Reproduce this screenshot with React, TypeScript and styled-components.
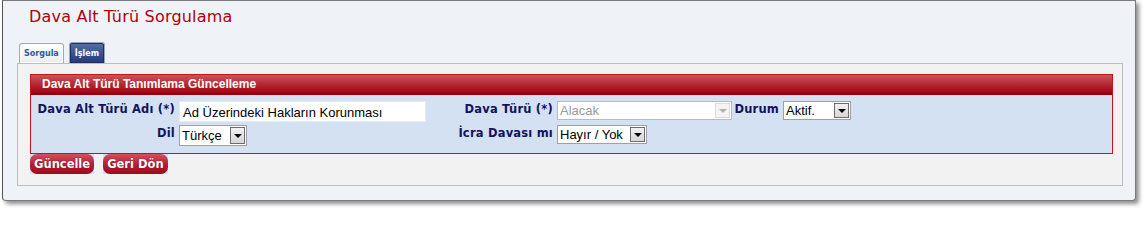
import styled, { createGlobalStyle } from 'styled-components';

const GlobalStyle = createGlobalStyle`
	html, body {
		margin: 0;
		padding: 0;
		background: #ffffff;
	}
	body {
		font-family: 'DejaVu Sans', Verdana, sans-serif;
	}
`;

const Page = styled.div`
	padding: 0 10px 11px 2px;
`;

const Window = styled.div`
	background: #eff3f8;
	border: 1px solid #7a7a7a;
	border-left-color: #555;
	border-radius: 0 0 4px 4px;
	box-shadow: 3px 3px 4px rgba(0, 0, 0, 0.45);
	height: 201px;
	box-sizing: border-box;
	padding: 7px 12px 0 14px;
`;

const Title = styled.h1`
	margin: 0 0 0 12px;
	font-family: 'DejaVu Sans', Verdana, sans-serif;
	font-weight: normal;
	font-size: 16px;
	letter-spacing: 0.2px;
	line-height: 18px;
	color: #b0000e;
`;

const TabBar = styled.div`
	display: flex;
	align-items: flex-end;
	gap: 5px;
	margin: 16px 0 0 2px;
	height: 21px;
`;

const Tab = styled.div<{ $active?: boolean }>`
	box-sizing: border-box;
	height: ${p => (p.$active ? '21px' : '20px')};
	padding: 0 ${p => (p.$active ? '5px' : '4px')};
	display: flex;
	align-items: center;
	font-family: 'DejaVu Sans', Tahoma, sans-serif;
	font-weight: bold;
	font-size: 8px;
	border-radius: 3px 3px 0 0;
	border: 1px solid ${p => (p.$active ? '#9aa7bd' : '#a9a9a9')};
	border-bottom: none;
	color: ${p => (p.$active ? '#ffffff' : '#2a5aa8')};
	background: ${p =>
		p.$active
			? 'linear-gradient(#5670a6, #23397a)'
			: 'linear-gradient(#ffffff, #ececec)'};
	box-shadow: ${p => (p.$active ? 'inset 0 0 0 1px #1d2f66' : 'inset 0 0 0 1px #ffffff')};
`;

const TabPanel = styled.div`
	border: 1px solid #bdbdbd;
	background: #f2f2f2;
	height: 123px;
	box-sizing: border-box;
	padding: 10px 9px 0 12px;
`;

const Section = styled.div`
	border: 1px solid #c0141e;
`;

const SectionHeader = styled.div`
	height: 20px;
	box-sizing: border-box;
	padding: 0 0 0 11px;
	display: flex;
	align-items: center;
	background: linear-gradient(#c9545d, #b0222c 60%, #9c0612);
	border-bottom: 2px solid #950009;
	color: #ffffff;
	font-family: 'Liberation Sans', Arial, sans-serif;
	font-weight: bold;
	font-size: 12px;
`;

const FormGrid = styled.div`
	background: #d4e1f2;
	display: grid;
	grid-template-columns: 148px 249px 129px 179px 47px 1fr;
	row-gap: 3px;
	padding: 6px 0 7px 0;
	align-items: start;
`;

const Label = styled.label`
	justify-self: end;
	padding: 1px 4px 0 0;
	font-family: 'DejaVu Sans', Verdana, sans-serif;
	font-weight: bold;
	font-size: 11.5px;
	letter-spacing: 0.2px;
	line-height: 14px;
	color: #12135e;
	white-space: nowrap;
`;

const TextInput = styled.div`
	width: 247px;
	height: 21px;
	box-sizing: border-box;
	background: #ffffff;
	border: 1px solid #e6ecf4;
	padding: 2px 3px;
	font-family: 'Liberation Sans', Arial, sans-serif;
	font-size: 13px;
	line-height: 17px;
	color: #000;
	white-space: nowrap;
`;

const SelectBox = styled.div<{ $width: number; $disabled?: boolean; $tall?: boolean }>`
	width: ${p => p.$width}px;
	height: ${p => (p.$tall ? 21 : 19)}px;
	box-sizing: border-box;
	display: flex;
	align-items: stretch;
	background: #ffffff;
	border: 1px solid ${p => (p.$disabled ? '#b7bcc4' : '#a0a0a0')};
	font-family: 'Liberation Sans', Arial, sans-serif;
	font-size: 13px;
	color: ${p => (p.$disabled ? '#9a9a9a' : '#000')};
`;

const SelectText = styled.span`
	flex: 1;
	padding: 0 2px;
	display: flex;
	align-items: center;
	white-space: nowrap;
	overflow: hidden;
`;

const SelectArrow = styled.span<{ $disabled?: boolean }>`
	width: 15px;
	margin: 1px;
	box-sizing: border-box;
	display: flex;
	align-items: center;
	justify-content: center;
	border: 1px solid ${p => (p.$disabled ? '#dcdcdc' : '#6d6d6d')};
	background: ${p => (p.$disabled ? '#f4f4f4' : 'linear-gradient(#f2f2f2, #d6d6d6)')};
	&::after {
		content: '';
		border-left: 4px solid transparent;
		border-right: 4px solid transparent;
		border-top: 4px solid ${p => (p.$disabled ? '#b0b0b0' : '#000')};
		margin-top: 1px;
	}
`;

const ButtonRow = styled.div`
	display: flex;
	gap: 9px;
`;

const Button = styled.div`
	background: #d4e1f2;
	height: 20px;
	display: flex;
`;

const ButtonFace = styled.span`
	border-radius: 7px;
	padding: 0 4px;
	display: flex;
	align-items: center;
	background: linear-gradient(#d3505f, #b81f34 50%, #9b0a1e);
	color: #ffffff;
	font-family: 'DejaVu Sans', Verdana, sans-serif;
	font-weight: bold;
	font-size: 11.5px;
	text-shadow: 0 0 1px #5a0010;
`;

type SelectProps = { value: string; width: number; disabled?: boolean; tall?: boolean };

const Select = ({ value, width, disabled, tall }: SelectProps) => (
	<SelectBox $width={width} $disabled={disabled} $tall={tall}>
		<SelectText>{value}</SelectText>
		<SelectArrow $disabled={disabled} />
	</SelectBox>
);

export default function App() {
	return (
		<Page>
			<GlobalStyle />
			<Window>
				<Title>Dava Alt Türü Sorgulama</Title>
				<TabBar>
					<Tab>Sorgula</Tab>
					<Tab $active>İşlem</Tab>
				</TabBar>
				<TabPanel>
					<Section>
						<SectionHeader>Dava Alt Türü Tanımlama Güncelleme</SectionHeader>
						<FormGrid>
							<Label>Dava Alt Türü Adı (*)</Label>
							<TextInput>Ad Üzerindeki Hakların Korunması</TextInput>
							<Label>Dava Türü (*)</Label>
							<Select value="Alacak" width={175} disabled />
							<Label>Durum</Label>
							<Select value="Aktif." width={68} />

							<Label>Dil</Label>
							<Select value="Türkçe" width={68} tall />
							<Label>İcra Davası mı</Label>
							<Select value="Hayır / Yok" width={90} />
						</FormGrid>
					</Section>
					<ButtonRow>
						<Button>
							<ButtonFace>Güncelle</ButtonFace>
						</Button>
						<Button>
							<ButtonFace>Geri Dön</ButtonFace>
						</Button>
					</ButtonRow>
				</TabPanel>
			</Window>
		</Page>
	);
}
